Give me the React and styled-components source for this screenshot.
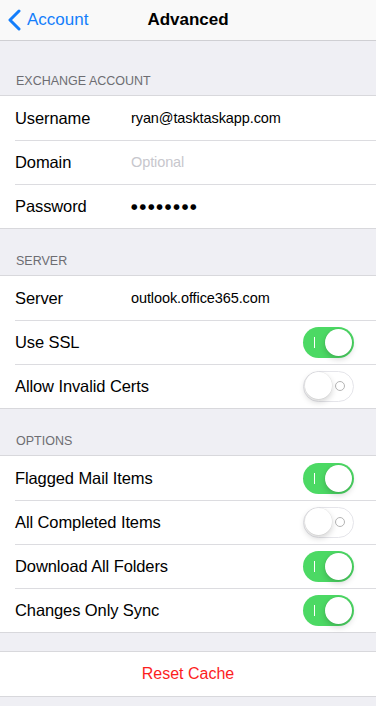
import React from 'react'
import styled, { createGlobalStyle } from 'styled-components'

const GlobalStyle = createGlobalStyle`
  html, body {
    margin: 0;
    padding: 0;
    background: #efeff4;
    font-family: 'Liberation Sans', Arial, sans-serif;
    -webkit-font-smoothing: antialiased;
  }
`

const Screen = styled.div`
  width: 376px;
  min-height: 706px;
  background: #efeff4;
  display: flex;
  flex-direction: column;
`

const NavBar = styled.div`
  position: relative;
  height: 41px;
  box-sizing: border-box;
  background: #f9f9f9;
  border-bottom: 1px solid #cfcfd3;
  display: flex;
  align-items: center;
  justify-content: center;
`

const BackButton = styled.div`
  position: absolute;
  left: 8px;
  top: 0;
  height: 40px;
  display: flex;
  align-items: center;
  gap: 6px;
  color: #147efb;
  font-size: 17px;
`

const Title = styled.div`
  font-size: 17px;
  font-weight: 700;
  color: #000;
`

const SectionHeader = styled.div`
  padding: 0 16px 8px;
  height: ${(p) => p.height}px;
  box-sizing: border-box;
  display: flex;
  align-items: flex-end;
  font-size: 12.5px;
  color: #6d6d72;
  text-transform: uppercase;
`

const Spacer = styled.div`
  height: ${(p) => p.height}px;
`

const Group = styled.div`
  background: #fff;
  box-shadow: 0 -1px 0 #d8d8dc, 0 1px 0 #d8d8dc;
`

const Row = styled.div`
  position: relative;
  height: 44px;
  display: flex;
  align-items: center;
  padding: 0 22px 0 15px;
  font-size: 16.5px;
  letter-spacing: -0.1px;
  color: #000;

  & + &::before {
    content: '';
    position: absolute;
    top: 0;
    left: 15px;
    right: 0;
    height: 1px;
    background: #dcdce0;
  }
`

const Label = styled.div`
  width: 116px;
  flex-shrink: 0;
`

const Value = styled.div`
  flex: 1;
  font-size: 14.5px;
  color: ${(p) => (p.placeholder ? '#c7c7cd' : '#000')};
`

const Dots = styled.div`
  flex: 1;
  font-family: 'DejaVu Sans', sans-serif;
  font-size: 7.5px;
  letter-spacing: 1.9px;
  color: #000;
`

const RowLabel = styled.div`
  flex: 1;
`

const ActionRow = styled.div`
  height: 44px;
  display: flex;
  align-items: center;
  justify-content: center;
  font-size: 16px;
  color: #fc1e1e;
`

const Track = styled.div`
  position: relative;
  width: 51px;
  height: 31px;
  box-sizing: border-box;
  border-radius: 16px;
  background: ${(p) => (p.on ? '#4cd964' : '#fff')};
  border: ${(p) => (p.on ? 'none' : '1.5px solid #e5e5ea')};
  flex-shrink: 0;
`

const Knob = styled.div`
  position: absolute;
  top: ${(p) => (p.on ? '2px' : '0.5px')};
  left: ${(p) => (p.on ? '22px' : '0.5px')};
  width: 27px;
  height: 27px;
  border-radius: 50%;
  background: #fff;
  box-shadow: 0 3px 6px rgba(0, 0, 0, 0.18), 0 0 0 0.5px rgba(0, 0, 0, 0.06);
`

const OnMark = styled.div`
  position: absolute;
  left: 11px;
  top: 10px;
  width: 1px;
  height: 11px;
  background: #fff;
`

const OffMark = styled.div`
  position: absolute;
  right: 8px;
  top: 9px;
  width: 8px;
  height: 8px;
  border-radius: 50%;
  border: 1px solid #b4b4b4;
`

const Toggle = ({ on }) => (
  <Track on={on ? 1 : 0}>
    {on ? <OnMark /> : <OffMark />}
    <Knob on={on ? 1 : 0} />
  </Track>
)

const Chevron = () => (
  <svg width="13" height="22" viewBox="0 0 13 22">
    <path
      d="M11 2 L2 11 L11 20"
      fill="none"
      stroke="#147efb"
      strokeWidth="3"
      strokeLinecap="round"
      strokeLinejoin="round"
    />
  </svg>
)

const App = () => (
  <Screen>
    <GlobalStyle />
    <NavBar>
      <BackButton>
        <Chevron />
        Account
      </BackButton>
      <Title>Advanced</Title>
    </NavBar>

    <SectionHeader height={55}>Exchange Account</SectionHeader>
    <Group>
      <Row>
        <Label>Username</Label>
        <Value>ryan@tasktaskapp.com</Value>
      </Row>
      <Row>
        <Label>Domain</Label>
        <Value placeholder={1}>Optional</Value>
      </Row>
      <Row>
        <Label>Password</Label>
        <Dots>●●●●●●●●</Dots>
      </Row>
    </Group>

    <SectionHeader height={48}>Server</SectionHeader>
    <Group>
      <Row>
        <Label>Server</Label>
        <Value>outlook.office365.com</Value>
      </Row>
      <Row>
        <RowLabel>Use SSL</RowLabel>
        <Toggle on />
      </Row>
      <Row>
        <RowLabel>Allow Invalid Certs</RowLabel>
        <Toggle />
      </Row>
    </Group>

    <SectionHeader height={48}>Options</SectionHeader>
    <Group>
      <Row>
        <RowLabel>Flagged Mail Items</RowLabel>
        <Toggle on />
      </Row>
      <Row>
        <RowLabel>All Completed Items</RowLabel>
        <Toggle />
      </Row>
      <Row>
        <RowLabel>Download All Folders</RowLabel>
        <Toggle on />
      </Row>
      <Row>
        <RowLabel>Changes Only Sync</RowLabel>
        <Toggle on />
      </Row>
    </Group>

    <Spacer height={20} />
    <Group>
      <ActionRow>Reset Cache</ActionRow>
    </Group>
  </Screen>
)

export default App
